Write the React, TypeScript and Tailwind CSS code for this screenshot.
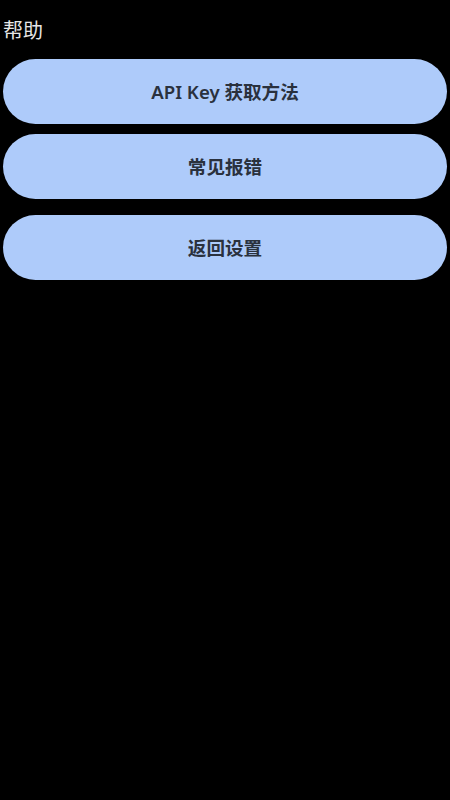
const items = ["API Key 获取方法", "常见报错", "返回设置"];

export default function App() {
  return (
    <div
      className="min-h-[800px] w-full bg-black px-[3px] pt-[18px]"
      style={{ fontFamily: '"Noto Sans", "Noto Sans CJK SC", sans-serif' }}
    >
      <div className="text-[20px] leading-[26px] text-[#e6e6e6]">帮助</div>
      <div className="mt-[15px] flex flex-col">
        {items.map((label, i) => (
          <button
            key={label}
            type="button"
            className={`flex h-[65px] w-full items-center justify-center rounded-full bg-[#aecbfa] text-[18.6px] font-semibold text-[#2a313d] ${
              i === 1 ? "mt-[10px]" : i === 2 ? "mt-[16px]" : ""
            }`}
          >
            {label}
          </button>
        ))}
      </div>
    </div>
  );
}
